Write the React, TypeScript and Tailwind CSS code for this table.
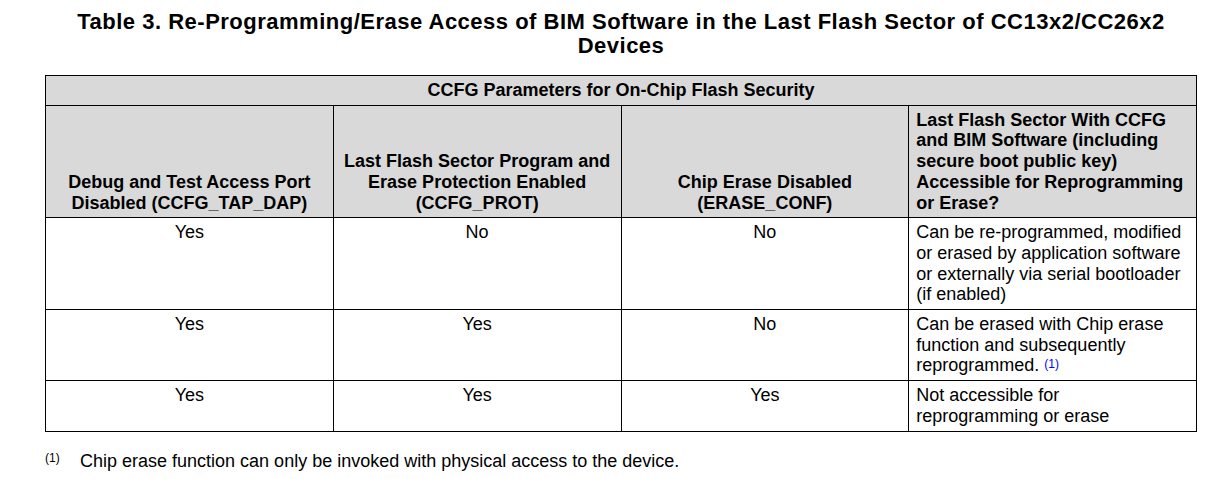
import type { ReactNode } from 'react';

type Row = {
    a:    string;
    b:    string;
    c:    string;
    text: ReactNode;
};

const rows: Row[] = [
    {
        a: 'Yes',
        b: 'No',
        c: 'No',
        text: (
            <>
                Can be re-programmed, modified<br />
                or erased by application software<br />
                or externally via serial bootloader<br />
                (if enabled)
            </>
        ),
    },
    {
        a: 'Yes',
        b: 'Yes',
        c: 'No',
        text: (
            <>
                Can be erased with Chip erase<br />
                function and subsequently<br />
                reprogrammed.{' '}
                <sup className="relative -top-[3px] align-baseline text-[12px] text-[#0000ff]">(1)</sup>
            </>
        ),
    },
    {
        a: 'Yes',
        b: 'Yes',
        c: 'Yes',
        text: (
            <>
                Not accessible for<br />
                reprogramming or erase
            </>
        ),
    },
];

const cell = 'border border-black px-[7px] py-[4px] leading-[20.7px] whitespace-nowrap';

export default function App() {
    return (
        <div
            className="min-h-[479px] bg-white text-black"
            style={{ fontFamily: '"Liberation Sans", Arial, sans-serif' }}
        >
            <div className="ml-[45px] w-[1152px] pt-[10px]">
                <h1 className="text-center text-[22px] font-bold leading-[24px] tracking-[0.5px]">
                    Table 3. Re-Programming/Erase Access of BIM Software in the Last Flash Sector of CC13x2/CC26x2
                    <br />
                    Devices
                </h1>

                <table className="mt-[17px] w-full table-fixed border-collapse text-[18px]">
                    <thead>
                        <tr className="bg-[#d9d9d9]">
                            <th colSpan={4} className={`${cell} text-center font-bold`}>
                                CCFG Parameters for On-Chip Flash Security
                            </th>
                        </tr>
                        <tr className="bg-[#d9d9d9] font-bold">
                            <th className={`${cell} text-center align-bottom`}>
                                Debug and Test Access Port<br />
                                Disabled (CCFG_TAP_DAP)
                            </th>
                            <th className={`${cell} text-center align-bottom`}>
                                Last Flash Sector Program and<br />
                                Erase Protection Enabled<br />
                                (CCFG_PROT)
                            </th>
                            <th className={`${cell} text-center align-bottom`}>
                                Chip Erase Disabled<br />
                                (ERASE_CONF)
                            </th>
                            <th className={`${cell} text-left align-bottom`}>
                                Last Flash Sector With CCFG<br />
                                and BIM Software (including<br />
                                secure boot public key)<br />
                                Accessible for Reprogramming<br />
                                or Erase?
                            </th>
                        </tr>
                    </thead>
                    <tbody>
                        {rows.map((r, i) => (
                            <tr key={i}>
                                <td className={`${cell} text-center align-top`}>{r.a}</td>
                                <td className={`${cell} text-center align-top`}>{r.b}</td>
                                <td className={`${cell} text-center align-top`}>{r.c}</td>
                                <td className={`${cell} text-left align-top`}>{r.text}</td>
                            </tr>
                        ))}
                    </tbody>
                </table>

                <div className="mt-[19px] flex text-[18px] leading-[21px]">
                    <span className="w-[35px] shrink-0 text-[12px] leading-[14px]">(1)</span>
                    <span>Chip erase function can only be invoked with physical access to the device.</span>
                </div>
            </div>
        </div>
    );
}
